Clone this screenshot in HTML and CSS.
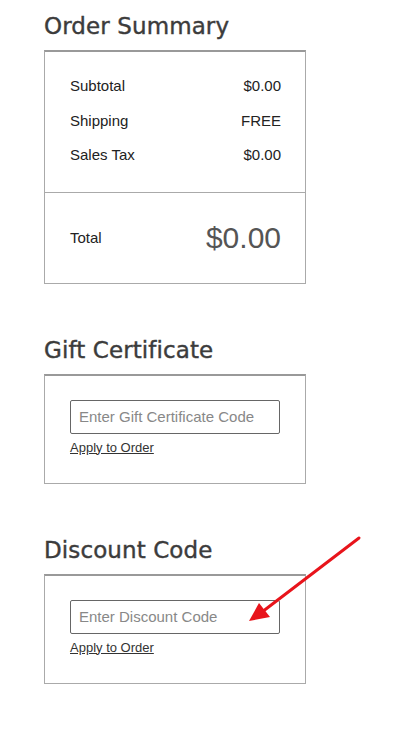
FILE: index.html
```html
<!DOCTYPE html>
<html lang="en">
<head>
    <meta charset="UTF-8" />
    <meta name="viewport" content="width=device-width, initial-scale=1" />
    <title>Order Summary</title>
    <link rel="stylesheet" href="styles.css">
</head>
<body>
<div class="page">
    <section class="block">
        <h2>Order Summary</h2>
        <div class="box summary">
            <div class="lines">
                <div class="row"><span>Subtotal</span><span>$0.00</span></div>
                <div class="row"><span>Shipping</span><span>FREE</span></div>
                <div class="row"><span>Sales Tax</span><span>$0.00</span></div>
            </div>
            <div class="total">
                <span>Total</span>
                <span class="amount">$0.00</span>
            </div>
        </div>
    </section>

    <section class="block">
        <h2>Gift Certificate</h2>
        <div class="box code-box">
            <input type="text" placeholder="Enter Gift Certificate Code" />
            <a href="#" class="apply">Apply to Order</a>
        </div>
    </section>

    <section class="block">
        <h2>Discount Code</h2>
        <div class="box code-box">
            <input type="text" placeholder="Enter Discount Code" />
            <a href="#" class="apply">Apply to Order</a>
        </div>
    </section>

    <svg class="arrow" width="414" height="729" viewBox="0 0 414 729">
        <line x1="359" y1="538" x2="262" y2="612" stroke="#e8141b" stroke-width="3" stroke-linecap="round" />
        <polygon points="249,621 259,603 270,617" fill="#e8141b" />
    </svg>
</div>
</body>
</html>
```

FILE: styles.css
```css
body {
  margin: 0;
  font-family: 'Liberation Sans', Arial, sans-serif;
  color: #222;
  background: #fff;
}
.page {
  position: relative;
  padding: 9px 0 0 44px;
  width: 262px;
}
.block {
  margin-bottom: 49px;
}
h2 {
  font-family: 'DejaVu Sans', sans-serif;
  font-weight: normal;
  font-size: 23px;
  line-height: 34px;
  color: #3c3c3c;
  margin: 0 0 7px 0;
  letter-spacing: 0.1px;
  -webkit-text-stroke: 0.4px #3c3c3c;
}
.box {
  border: 1px solid #aaa;
  border-top: 2px solid #999;
}
.lines {
  padding: 17px 24px 19px 25px;
  border-bottom: 1px solid #aaa;
}
.row {
  display: flex;
  justify-content: space-between;
  font-size: 15px;
  line-height: 34.5px;
}
.total {
  display: flex;
  justify-content: space-between;
  align-items: center;
  height: 90px;
  padding: 0 24px 0 25px;
  font-size: 15px;
}
.amount {
  font-size: 30px;
  color: #555;
}
.code-box {
  padding: 24px 24px 27px 25px;
}
input[type="text"] {
  display: block;
  box-sizing: border-box;
  width: 210px;
  height: 34px;
  padding: 0 8px;
  border: 1px solid #666;
  border-radius: 2px;
  font-family: 'Liberation Sans', Arial, sans-serif;
  font-size: 15px;
  color: #333;
}
input::placeholder {
  color: #888;
}
.apply {
  display: inline-block;
  margin-top: 6px;
  font-size: 13px;
  line-height: 16px;
  color: #333;
}
.arrow {
  position: absolute;
  left: 0;
  top: 0;
  pointer-events: none;
}
```
